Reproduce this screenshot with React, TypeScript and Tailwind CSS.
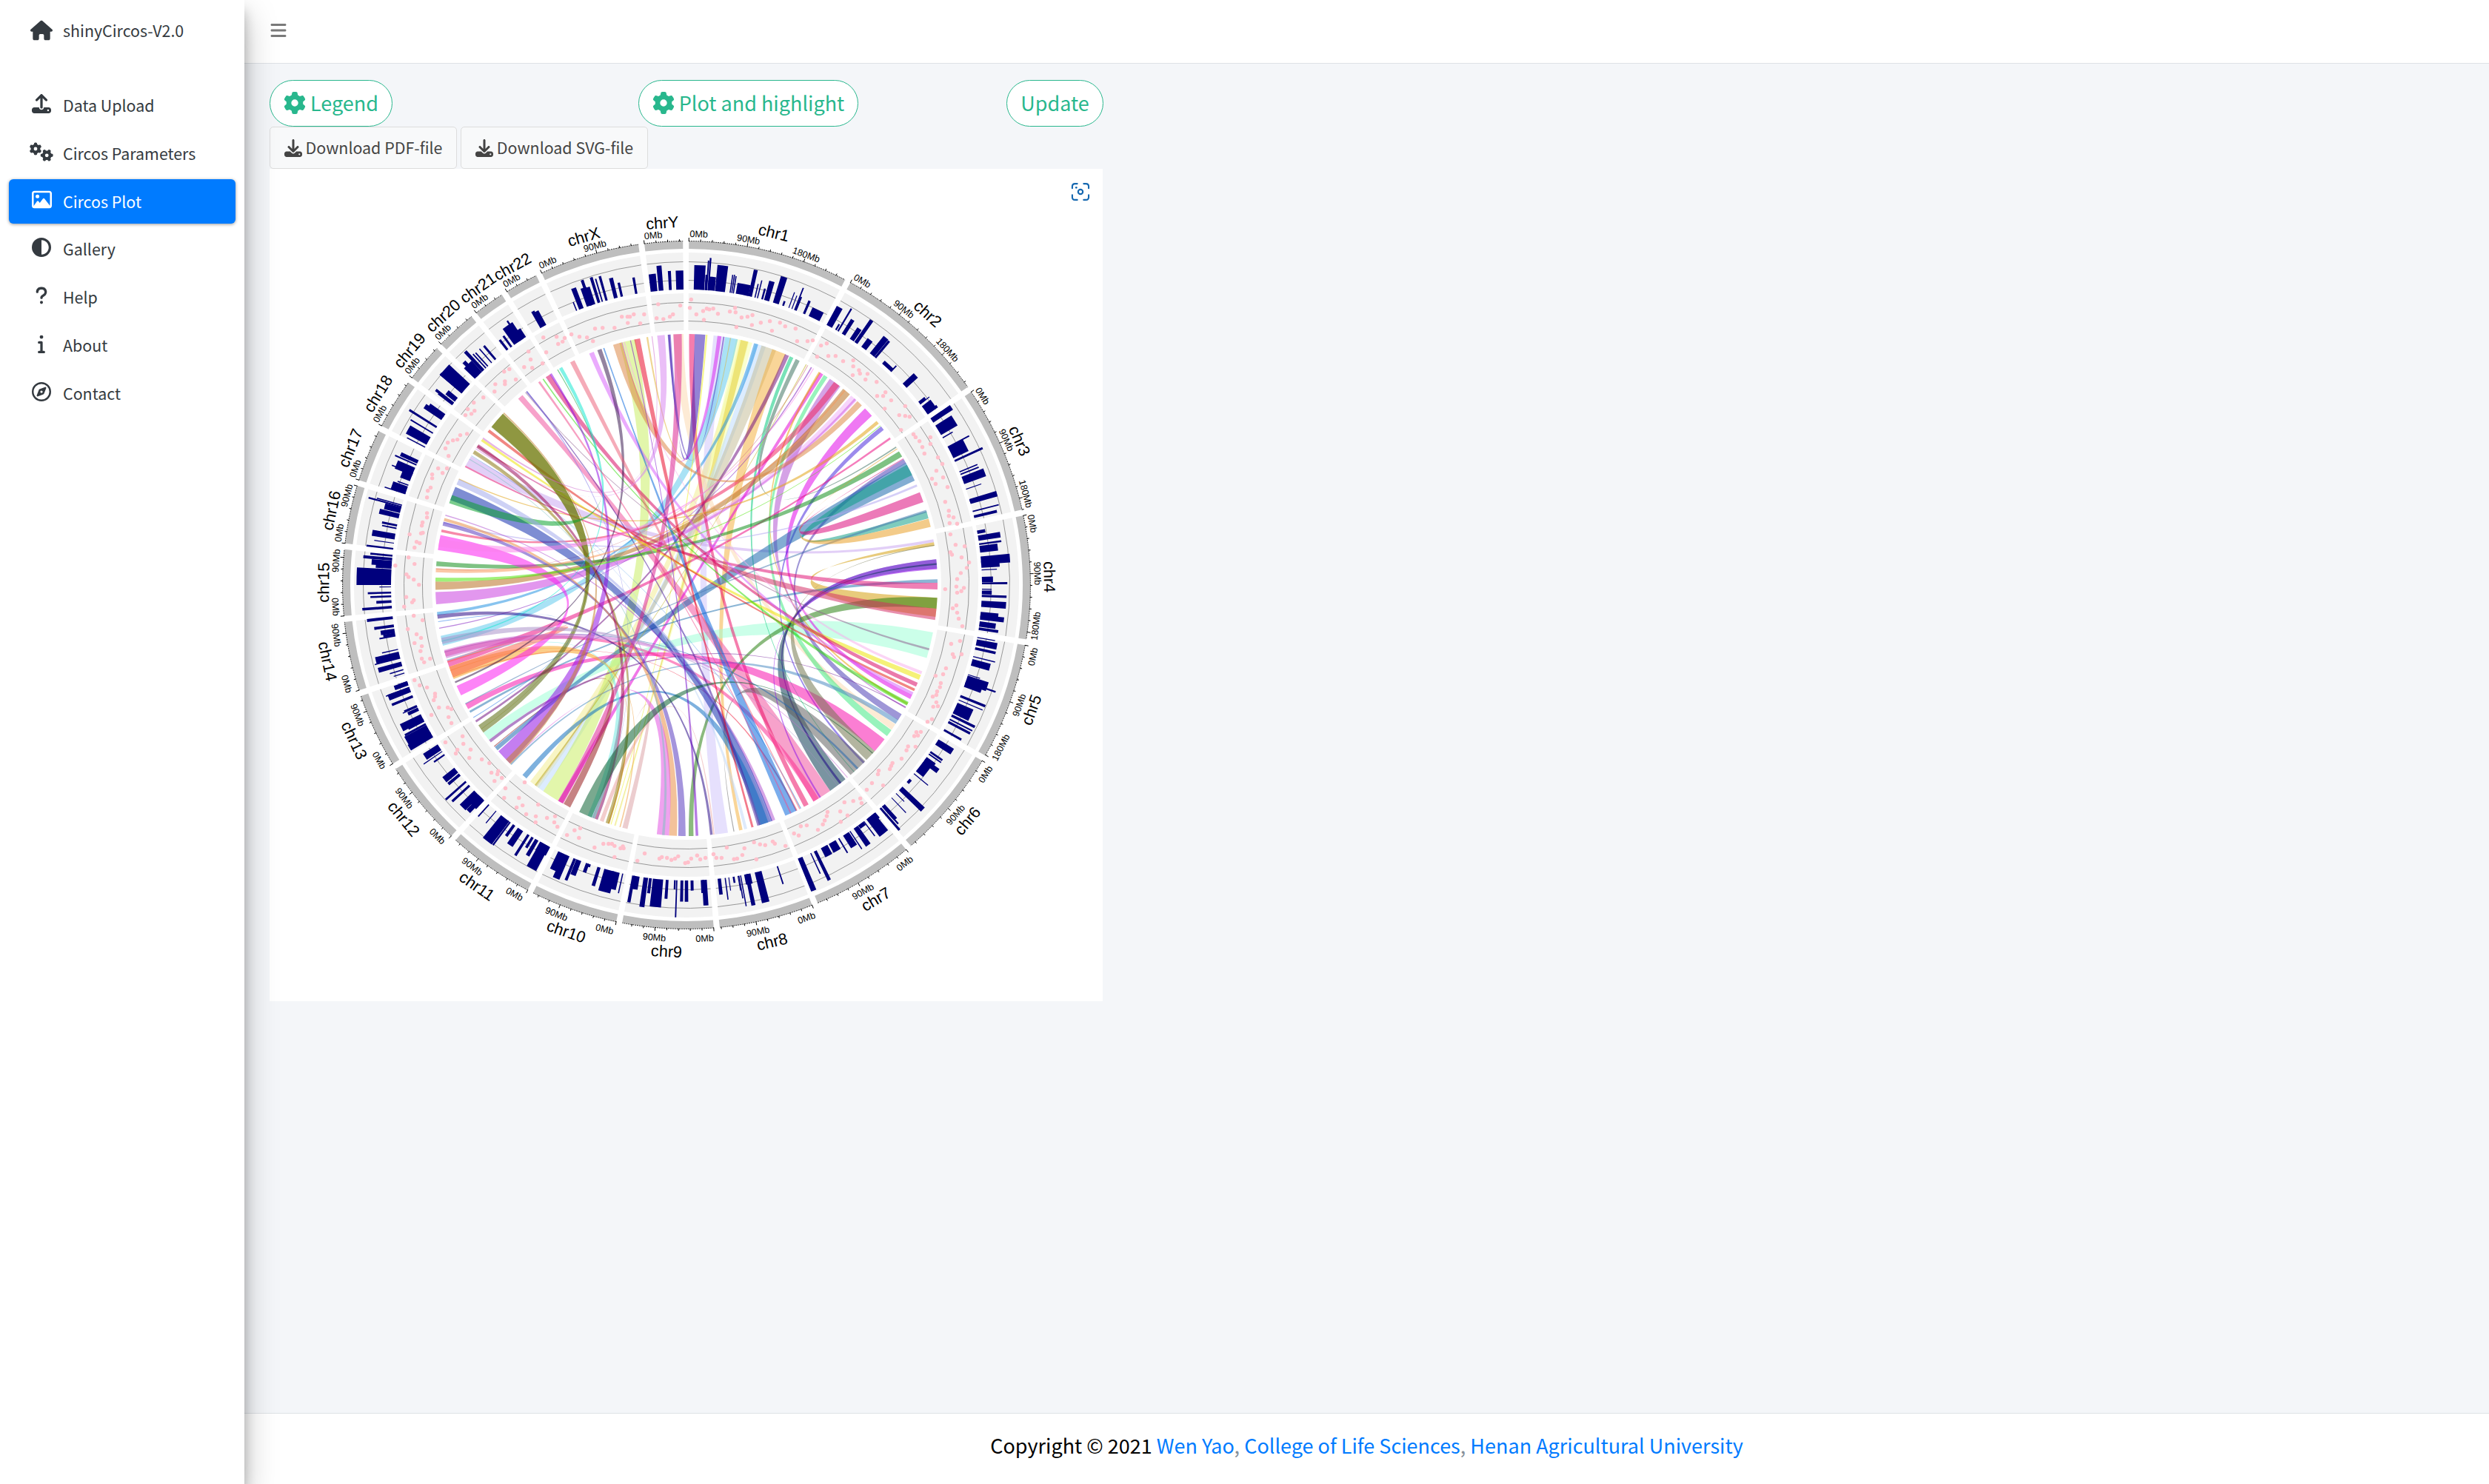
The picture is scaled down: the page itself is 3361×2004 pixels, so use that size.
import React from 'react';
import {
  FaHouse, FaUpload, FaDownload, FaGears, FaRegImage, FaCircleHalfStroke,
  FaQuestion, FaInfo, FaRegCompass, FaGear, FaBars,
} from 'react-icons/fa6';

/* ---------- circular genome plot ---------- */

const CX = 563;
const CY = 562;
const RAD = Math.PI / 180;
const DEG_PER_MB = 0.10854;

const CHROMS: [string, number][] = [
  ['chr1', 249.25], ['chr2', 243.2], ['chr3', 198.02], ['chr4', 191.15], ['chr5', 180.92],
  ['chr6', 171.12], ['chr7', 159.14], ['chr8', 146.36], ['chr9', 141.21], ['chr10', 135.53],
  ['chr11', 135.01], ['chr12', 133.85], ['chr13', 115.17], ['chr14', 107.35], ['chr15', 102.53],
  ['chr16', 90.35], ['chr17', 81.2], ['chr18', 78.08], ['chr19', 59.13], ['chr20', 63.03],
  ['chr21', 48.13], ['chr22', 51.3], ['chrX', 155.27], ['chrY', 59.37],
];

let cursor = 0.4;
const SECTORS = CHROMS.map(([name, mb]) => {
  const a0 = cursor;
  const a1 = a0 + mb * DEG_PER_MB;
  cursor = a1 + 1;
  return { name, mb, a0, a1 };
});

const pt = (a: number, r: number): [number, number] => [
  CX + r * Math.sin(a * RAD),
  CY - r * Math.cos(a * RAD),
];
const ps = (a: number, r: number) => pt(a, r).map((v) => v.toFixed(1)).join(' ');

const ring = (a0: number, a1: number, r0: number, r1: number) =>
  `M${ps(a0, r1)}A${r1} ${r1} 0 0 1 ${ps(a1, r1)}L${ps(a1, r0)}A${r0} ${r0} 0 0 0 ${ps(a0, r0)}Z`;
const arc = (a0: number, a1: number, r: number) => `M${ps(a0, r)}A${r} ${r} 0 0 1 ${ps(a1, r)}`;

/* Samples are stored per quadrant relative to the quadrant's own origin, in 1/2.851 px units. */
const K = 2.851;
const parse = (s: string) => s.trim().split(/\s+/).map((t) => t.split(',').map(Number));
const ORIGIN = { ne: [20, 1539], se: [20, 28.5], sw: [1502, 28.5], nw: [1502, 1539] } as const;

const BARS: Record<keyof typeof ORIGIN, string> = {
  ne: `72,308,42 97,345,6 105,290,4 113,280,5 120,353,26 160,309,40 198,345,3 205,345,3 211,350,3 242,380,50 287,326,14 296,380,3
  310,366,3 322,398,6 349,370,20 396,353,24 398,446,6 436,412,2 445,425,2 470,395,4 462,430,5 494,445,8 527,480,46
  610,470,24 608,535,5 655,475,5 660,518,14 686,552,18 733,520,14 727,595,22 788,587,22 800,600,8 800,690,44 828,695,4
  903,732,22 940,820,12 955,815,2 970,840,34 985,850,10 1040,855,20 1052,905,44 1045,950,3 1108,965,4 1095,1000,50
  1160,1012,7 1140,1075,4 1145,1085,4 1168,1105,30 1155,1150,2 1215,1187,20 1195,1192,12 1222,1230,4 1215,1255,10
  1170,1330,12 1228,1345,20 1232,1370,6 1218,1393,26 1265,1435,32 1225,1455,26 1215,1478,2 1200,1517,20 1255,1532,7`,
  se: `1195,45,2 1195,58,14 1252,74,8 1250,107,24 1220,150,22 1242,163,18 1210,187,20 1220,208,9
  1208,243,2 1215,265,24 1210,290,9 1208,325,3 1188,345,26 1150,388,2 1178,420,34 1210,440,5 1155,435,18 1170,495,9
  1160,510,2 1115,530,46 1130,575,9 1112,600,8 1120,590,4 1078,624,7 1043,670,24 1005,703,7 1000,712,4 988,745,18
  975,722,14 945,750,44 950,800,2 878,785,16 930,893,20 865,905,2 858,862,2 840,972,8 835,948,5 825,930,14
  780,985,40 745,995,3 750,935,34 720,1030,20 695,1045,3 665,1035,26 700,960,24 640,1060,4 600,1052,30 568,1070,28 570,1165,12
  535,1140,3 510,1205,20 392,1180,4 325,1250,28 278,1262,14 262,1180,24 250,1265,3 237,1235,3 228,1205,2 205,1175,6
  180,1240,3 190,1205,2 153,1220,12 95,1262,18 84,1214,12 42,1205,10`,
  sw: `1502,1248,12 1483,1247,10 1460,1308,4 1456,1200,5 1423,1236,10 1382,1268,42 1356,1215,10 1330,1268,18 1302,1200,22
  1280,1250,11 1240,1215,3 1215,1200,28 1185,1210,46 1143,1187,12 1109,1135,12 1126,1110,10 1065,1145,20 1038,1165,10
  1000,1158,26 988,1125,24 905,1120,40 940,1060,44 890,1070,14 885,1040,9 843,1070,9 822,1030,24 808,995,10
  757,1030,5 735,1015,42 770,1000,4 730,945,2 700,920,4 662,900,18 640,885,30 680,880,32 600,862,8 575,855,7
  585,795,10 570,778,24 490,718,2 530,710,5 495,690,26 435,655,24 425,630,38 418,607,7 405,578,28 430,580,12
  410,522,3 415,515,5 430,525,12 368,490,9 355,462,22 345,457,3 378,425,16 395,415,10 375,380,2 360,370,3 316,357,18
  302,335,3 306,320,26 330,290,3 320,235,4 325,213,16 300,196,10 335,225,10 272,165,10 254,122,9 308,95,9 285,75,6
  275,60,6 320,36,2`,
  nw: `232,1505,66 306,1465,14 290,1450,20 258,1430,10 285,1418,6 270,1387,6 300,1367,2 292,1338,22 330,1298,7 330,1310,4
  320,1255,18 340,1235,22 278,1203,5 310,1205,3 340,1162,3 368,1155,30 390,1140,3 405,1110,30 385,1075,32 368,1078,3
  380,1040,4 402,1035,14 426,972,3 430,940,34 440,903,4 435,865,7 495,850,18 512,847,14 537,788,9 548,800,10
  580,797,18 570,710,52 555,725,10 650,640,12 660,690,40 645,680,14 690,645,4 705,630,3 722,618,7 680,650,4
  783,595,8 797,580,7 813,540,44 812,522,5 855,555,16 910,485,12 925,485,14 1066,450,3 1067,396,18 1100,365,10
  1105,395,22 1120,393,18 1135,355,10 1152,360,4 1168,350,8 1211,357,14 1241,375,8 1298,355,8 1370,342,26
  1396,310,18 1436,330,10 1475,328,28`,
};

const DOTS: Record<keyof typeof ORIGIN, string> = {
  ne: `38,440 33,472 58,497 84,484 98,475 108,478 123,475 141,495 87,518 207,472 187,486 209,489 232,509 255,506 274,500 272,538
  212,546 306,529 341,523 349,560 380,529 400,543 440,552 446,600 486,600 506,597 538,617 560,609 523,660 566,657 594,657
  623,677 662,674 662,697 660,731 684,712 688,725 717,726 709,748 752,757 754,811 777,811 786,797 808,828 783,860 862,850
  839,885 862,888 879,891 846,942 894,959 902,970 917,985 928,1008 936,1033 959,970 959,996 988,1048 1005,1073 982,1099
  1008,1125 965,1130 979,1150 1025,1162 1016,1219 1030,1253 1030,1273 1048,1279 1033,1301 1062,1303 1036,1344 1056,1384
  1091,1390 1036,1413 1042,1422 1079,1433 1108,1452 1099,1473 1076,1493 1062,1516 1088,1550 1059,1545 1016,1555`,
  se: `1062,58 1078,52 1059,107 1045,118 1062,135 1068,158 1082,187 1073,244 1039,255 1079,295 1045,295 1050,306 1019,349
  1008,372 979,378 999,406 996,422 985,438 968,458 982,452 982,480 988,495 970,497 965,545 948,555 905,595 922,594 897,610
  911,608 902,651 873,650 867,665 848,697 813,714 808,725 803,737 760,743 757,757 734,791 777,800 714,817 689,850 694,868
  662,860 628,865 563,902 612,900 640,916 614,940 560,918 552,935 545,950 526,971 483,954 460,957 434,985 452,993 401,1033
  352,1016 360,1024 323,1030 303,1027 280,1019 243,1042 175,1039 235,1068 289,1085 203,1084 215,1082 155,1079 135,1079
  124,1065 93,1079 73,1085 61,1070 38,1082 26,1096 15,1099`,
  sw: `1470,1073 1458,1082 1444,1087 1427,1079 1407,1076 1398,1082 1341,1062 1313,1090 1260,1042 1248,1042 1257,1035 1225,1033
  1215,1025 1202,1025 1182,1025 1148,1039 1225,1076 1093,965 1071,973 1042,991 1088,1002 1005,959 993,942 996,919 965,925
  922,919 921,942 885,911 871,877 848,885 857,848 931,874 800,848 805,811 879,788 791,771 763,783 751,751 777,745 774,757
  743,714 714,700 666,694 671,662 643,640 640,611 614,677 620,663 574,634 597,560 586,537 520,529 549,500 583,500 597,506
  534,447 534,458 529,472 503,423 475,415 455,395 515,312 492,326 483,312 478,283 483,264 455,252 480,232 463,218 429,198
  486,164 452,147 415,112 446,95 452,87 423,75`,
  nw: `472,1538 452,1518 432,1508 424,1498 455,1458 432,1433 381,1464 455,1395 475,1378 463,1373 487,1338 480,1340 436,1344
  483,1310 486,1298 503,1279 503,1262 503,1202 506,1176 517,1164 523,1128 523,1113 563,1108 546,1090 580,1090 586,1042
  574,1013 583,991 603,982 620,979 631,962 657,957 651,885 674,880 686,868 660,862 683,837 720,817 763,794 766,766 803,766
  803,755 845,748 800,717 820,708 877,700 908,703 902,671 894,640 948,686 962,643 951,586 1002,583 1008,611 1025,602
  1033,588 1059,574 1090,583 1119,586 1142,600 1150,552 1179,549 1225,549 1253,506 1275,506 1284,506 1299,497 1276,530
  1324,532 1339,497 1387,512 1393,458 1413,515 1438,506 1450,497 1478,463`,
};

/* Each ribbon: two arcs in degrees and its base colour, drawn half transparent. */
const LINKS: [number, number, number, number, string][] = [
  [6.2, 8.9, 170.5, 173.5, '#cfc4fb'],
  [12.2, 14.4, 216, 218.5, '#f2ec90'],
  [11.4, 15.2, 196.3, 196.6, '#f6ffa8'],
  [12.5, 14.2, 196.5, 196.7, '#e4d040'],
  [15.9, 18.4, 214.8, 216.5, '#bcdcff'],
  [17.4, 20.9, 216.6, 217, '#c4bd98'],
  [20, 23.3, 167.1, 167.9, '#f4b03c'],
  [8.9, 11.8, 256, 258.3, '#5cc8ec'],
  [15.6, 16.6, 263.1, 263.8, '#1f8fe0'],
  [100.9, 106.9, 231.9, 234, '#9dffd6'],
  [357, 359.3, 123.7, 125.2, '#fbd9b0'],
  [344.5, 348.2, 210.8, 214.8, '#c8ee60'],
  [145.1, 149.6, 317.9, 319.2, '#f0509c'],
  [298.4, 300.9, 79.5, 80.2, '#c8a4f0'],
  [41, 42.7, 265.6, 268.4, '#f0b0fa'],
  [265.6, 268.4, 42, 42.5, '#d060e0'],
  [0.6, 1.9, 150.9, 152.1, '#ec0a64'],
  [1.9, 4.3, 355.8, 356.2, '#3414b0'],
  [4.4, 4.8, 197.4, 197.6, '#f0f020'],
  [7.1, 8, 345, 345.2, '#d820f0'],
  [23.1, 24.1, 236.8, 237.3, '#701080'],
  [24.3, 25.2, 138, 138.2, '#00c878'],
  [25.8, 26.8, 56.5, 56.8, '#3a705c'],
  [28.8, 29, 273.6, 273.8, '#d07080'],
  [29.7, 30, 260, 260.2, '#8020c0'],
  [32.1, 33, 209.6, 210.7, '#e400d4'],
  [31.8, 32.3, 118, 118.5, '#e8a000'],
  [33.2, 34.2, 125.3, 127, '#3ce880'],
  [34.8, 37.8, 119.1, 119.4, '#b050d0'],
  [36, 37.5, 282.2, 282.8, '#f0205c'],
  [38.6, 40.6, 268.9, 270.8, '#b86c1c'],
  [42.9, 44.3, 343, 345, '#dc8440'],
  [45.3, 47.6, 116, 117, '#e000e8'],
  [49.2, 50, 294.8, 295.1, '#e0a010'],
  [50.8, 51.8, 134.8, 135.3, '#4424dc'],
  [54, 54.5, 251, 252.6, '#ec0a80'],
  [57.8, 59.2, 274.3, 275.4, '#0c8c14'],
  [59.9, 61, 121, 122.6, '#4838b4'],
  [60.9, 65.4, 228.8, 229.8, '#1464ac'],
  [61.4, 64, 72.9, 74.6, '#0c9c84'],
  [68.3, 70.7, 59.7, 59.9, '#dc0478'],
  [66.4, 66.9, 284.2, 284.6, '#b0a4f0'],
  [72.6, 73.2, 241.6, 241.9, '#4878b0'],
  [74.7, 76.6, 57, 57.2, '#e89c20'],
  [80.2, 81, 92.9, 97.3, '#d49c08'],
  [84.1, 86.2, 141.9, 142.4, '#5a0cc0'],
  [84.1, 86, 141.9, 142.4, '#8040d8'],
  [85, 85.4, 140.7, 145.1, '#04344e'],
  [88.7, 89.5, 239.4, 239.9, '#2474b0'],
  [89.5, 91, 298, 298.4, '#e01074'],
  [92.9, 95.4, 178.4, 179.5, '#247c0c'],
  [95.4, 98, 303.5, 303.8, '#d42c64'],
  [104.6, 105.1, 320, 320.2, '#906090'],
  [110.1, 110.8, 345.5, 345.8, '#f8b0ec'],
  [111, 112.2, 305, 305.6, '#ece400'],
  [112.9, 113.9, 325.9, 327.1, '#d80460'],
  [114.4, 115, 307.6, 308.3, '#e41c14'],
  [115.3, 116.1, 337.2, 338.3, '#d860fc'],
  [117.8, 118.7, 325, 325.3, '#2cdc04'],
  [119, 119.2, 231.2, 231.9, '#701898'],
  [122.5, 123.6, 224.2, 224.6, '#4888c0'],
  [127.9, 131.4, 240.4, 241.7, '#f80cac'],
  [131.4, 134.2, 80.8, 81, '#70744c'],
  [134.6, 139.2, 169, 169.2, '#5c5c5c'],
  [136.8, 137.3, 254.4, 254.6, '#2468b0'],
  [147.6, 148, 86, 86.4, '#9010e8'],
  [148.2, 149.6, 253.4, 254.8, '#fc2c90'],
  [153.8, 154.2, 248.4, 248.6, '#f01c3c'],
  [152.8, 153, 301, 301.1, '#2080e0'],
  [154, 156.8, 340.6, 340.9, '#0464dc'],
  [159.3, 160.2, 286, 286.3, '#b054d0'],
  [160, 162.8, 289.8, 293, '#0c28ac'],
  [161, 163.2, 219.6, 220.8, '#0c6cc0'],
  [162.8, 163.6, 320.3, 320.6, '#4c1c9c'],
  [166, 166.7, 302, 302.2, '#c0d8f8'],
  [173.6, 173.9, 199.3, 200.2, '#e8a0a0'],
  [174, 174.6, 262.3, 263.2, '#240484'],
  [177.3, 177.9, 347, 347.2, '#7408cc'],
  [180.2, 181.9, 283.7, 284.6, '#5434bc'],
  [182.2, 184, 284.8, 285.5, '#e88c40'],
  [184, 186.8, 224.7, 224.9, '#e050e0'],
  [185, 185.6, 300, 300.2, '#80c0c0'],
  [193.6, 194.8, 201.8, 202, '#dca0a4'],
  [195.2, 195.5, 250, 250.2, '#f0a040'],
  [197.9, 198.3, 248, 251, '#f8a020'],
  [197.9, 198.8, 301.6, 302.5, '#90780c'],
  [200.7, 202.1, 303.2, 304.1, '#980450'],
  [201.4, 203.2, 252.4, 252.7, '#70e8e0'],
  [202.2, 205.3, 132, 132.2, '#045c2c'],
  [207.6, 209.3, 229.9, 230.1, '#941414'],
  [209.4, 210.8, 357, 358.9, '#dc2090'],
  [216.9, 217.2, 28.4, 28.6, '#c0b020'],
  [224.8, 228.5, 327, 327.5, '#900ce4'],
  [224.5, 226, 313.1, 313.4, '#c4802c'],
  [234, 236, 309, 313, '#546404'],
  [234.9, 235, 309.1, 313, '#7c8410'],
  [243.9, 246.3, 278, 281.5, '#fc14f0'],
  [248.6, 251, 252, 252.3, '#fc6450'],
  [247, 247.4, 339.2, 340.2, '#34144c'],
  [256.9, 257.2, 329.5, 330.3, '#10e8d0'],
  [256.4, 257.8, 143, 143.1, '#a890c8'],
  [261.5, 261.7, 238, 238.2, '#2878e8'],
  [253, 255, 140, 140.2, '#c870d4'],
  [270.8, 271.7, 50.5, 50.7, '#4ce404'],
  [272.9, 273.8, 39, 39.3, '#f89858'],
  [278.8, 280.6, 30.3, 30.5, '#fc80ec'],
  [289, 291, 329, 329.2, '#04a028'],
  [293.6, 295, 160.2, 160.4, '#a0a8ec'],
  [305.6, 306, 352, 352.2, '#d070d0'],
  [320.3, 320.6, 200.9, 201, '#8078e8'],
  [323.8, 324.3, 155.3, 155.6, '#f04c8c'],
  [332.4, 333.5, 153, 153.3, '#ec6078'],
  [348, 349.3, 164.5, 165, '#e80424'],
  [350.8, 351.2, 10, 10.2, '#e0b030'],
  [353.3, 355, 302.8, 303, '#d884f0'],
  [355.7, 356.4, 8.4, 8.7, '#4c28b8'],
];

const RL = 339;
const ribbon = (a0: number, a1: number, b0: number, b1: number) =>
  `M${ps(a0, RL)}A${RL} ${RL} 0 0 1 ${ps(a1, RL)}Q${CX} ${CY} ${ps(b0, RL)}` +
  `A${RL} ${RL} 0 0 1 ${ps(b1, RL)}Q${CX} ${CY} ${ps(a0, RL)}Z`;

const quadrants = ['ne', 'se', 'sw', 'nw'] as const;

function ArcText({ a, r, size, children }: { a: number; r: number; size: number; children: string }) {
  const norm = ((a % 360) + 360) % 360;
  const flipped = norm > 90.8 && norm < 269.5;
  const [x, y] = pt(norm, r);
  return (
    <text
      transform={`translate(${x.toFixed(1)} ${y.toFixed(1)}) rotate(${(flipped ? norm + 180 : norm).toFixed(2)})`}
      y={size * 0.36}
      fontSize={size}
      textAnchor="middle"
    >
      {children}
    </text>
  );
}

function CircosPlot() {
  return (
    <svg
      className="block h-[1124px] w-[1124px] font-normal"
      viewBox="0 0 1124 1124"
      fontFamily="'Liberation Sans', Arial, sans-serif"
    >
      {SECTORS.map((s) => {
        const ticks = [];
        for (let mb = 0; mb <= s.mb; mb += 18) {
          const a = s.a0 + mb * DEG_PER_MB;
          ticks.push(`M${ps(a, 464)}L${ps(a, mb % 90 === 0 ? 469 : 467)}`);
        }
        const labels = [];
        for (let mb = 0; mb <= s.mb; mb += 90) {
          const half = mb === 0 ? 1.6 : mb === 90 ? 2 : 2.4;
          const raw = s.a0 + mb * DEG_PER_MB;
          labels.push({ mb, a: Math.min(Math.max(raw, s.a0 + half), s.a1 - half) });
        }
        const mid = (s.a0 + s.a1) / 2;
        const low = mid > 91 && mid < 269;
        return (
          <g key={s.name}>
            <path d={ring(s.a0, s.a1, 454, 464)} fill="#bebebe" />
            <path d={ring(s.a0, s.a1, 399, 449)} fill="#f2f2f2" />
            <path d={ring(s.a0, s.a1, 344, 394)} fill="#f2f2f2" />
            {[436.5, 411.5, 381.5, 356.5].map((r) => (
              <path key={r} d={arc(s.a0, s.a1, r)} fill="none" stroke="#808080" strokeWidth="0.8" />
            ))}
            <path d={arc(s.a0, s.a1, 464.4)} fill="none" stroke="#000" strokeWidth="0.9" strokeDasharray="2 1" />
            <path d={ticks.join('')} stroke="#000" strokeWidth="1" />
            {labels.map((l) => (
              <ArcText key={l.mb} a={l.a} r={low ? 477.5 : 474.5} size={12.6}>{`${l.mb}Mb`}</ArcText>
            ))}
            <ArcText a={mid} r={low ? 495 : 490.5} size={21.6}>{s.name}</ArcText>
          </g>
        );
      })}
      {quadrants.map((q) => (
        <g key={q}>
          {parse(BARS[q]).map(([x, y, w], i) => {
            const dx = (x - ORIGIN[q][0]) / K;
            const dy = (y - ORIGIN[q][1]) / K;
            const a = Math.atan2(dx, -dy) / RAD;
            const r = Math.max(Math.hypot(dx, dy), 403);
            const h = (w + 1.5) / K / r / RAD / 2;
            return <path key={i} d={ring(a - h, a + h, 399, r)} fill="#00007d" />;
          })}
          {parse(DOTS[q]).map(([x, y], i) => (
            <circle
              key={i}
              cx={CX + (x - ORIGIN[q][0]) / K}
              cy={CY + (y - ORIGIN[q][1]) / K}
              r="2.7"
              fill="#ffc0cb"
            />
          ))}
        </g>
      ))}
      {LINKS.map(([a0, a1, b0, b1, c], i) => (
        <path key={i} d={ribbon(a0, a1, b0, b1)} fill={c} fillOpacity="0.53" />
      ))}
    </svg>
  );
}

/* ---------- page ---------- */

const NAV = [
  { label: 'Data Upload', Icon: FaUpload, size: 26 },
  { label: 'Circos Parameters', Icon: FaGears, size: 32 },
  { label: 'Circos Plot', Icon: FaRegImage, size: 27, active: true },
  { label: 'Gallery', Icon: FaCircleHalfStroke, size: 26 },
  { label: 'Help', Icon: FaQuestion, size: 26 },
  { label: 'About', Icon: FaInfo, size: 26 },
  { label: 'Contact', Icon: FaRegCompass, size: 26 },
];

function PillButton({ label, gear, className }: { label: string; gear?: boolean; className: string }) {
  return (
    <button
      className={`flex h-[63px] shrink-0 items-center justify-center gap-[6px] rounded-full border border-[#28b78d] bg-white text-[27px] text-[#28b78d] ${className}`}
    >
      {gear && <FaGear size={30} className="-mt-[2px]" />}
      <span>{label}</span>
    </button>
  );
}

function DownloadButton({ label }: { label: string }) {
  return (
    <button className="flex h-[57px] w-[253px] items-center justify-center gap-[5px] rounded-[5px] border border-[#ddd] bg-[#f8f9fa] text-[21.4px] text-[#444]">
      <FaDownload size={24} />
      <span>{label}</span>
    </button>
  );
}

export default function App() {
  return (
    <div className="flex h-[2004px] w-[3361px] overflow-hidden bg-[#f4f6f9] font-['Noto_Sans_CJK_SC','Open_Sans',sans-serif] font-normal whitespace-nowrap">
      <aside className="relative z-10 flex w-[330px] shrink-0 flex-col bg-white text-[21.4px] text-[#343a40] shadow-[0_21px_42px_rgba(0,0,0,0.25),0_15px_15px_rgba(0,0,0,0.22)]">
        <div className="flex h-[85px] items-center gap-[14px] pl-[41px]">
          <FaHouse size={30} className="-mt-[4px]" />
          <span className="-mt-[3px]">shinyCircos-V2.0</span>
        </div>
        <nav className="mt-[27px] flex flex-col gap-[4.8px] px-[12px]">
          {NAV.map(({ label, Icon, size, active }) => (
            <a
              key={label}
              className={
                active
                  ? 'flex h-[60px] items-center rounded-[6px] bg-[#007bff] pl-[28px] text-white shadow-[0_1px_4px_rgba(0,0,0,0.4)]'
                  : 'flex h-[60px] items-center pl-[28px]'
              }
            >
              <span className="flex w-[32px] justify-center">
                <Icon size={size} className="-mt-[4px] shrink-0" />
              </span>
              <span className="ml-[13px]">{label}</span>
            </a>
          ))}
        </nav>
      </aside>

      <div className="flex min-w-0 flex-1 flex-col">
        <header className="flex h-[86px] shrink-0 items-center border-b border-[#dee2e6] bg-white pl-[34px]">
          <FaBars size={24} className="-mt-[3px] text-[#7a7a7a]" />
        </header>

        <main className="flex-1 pt-[22px] pl-[34px]">
          <div className="flex w-[1126px]">
            <PillButton label="Legend" gear className="w-[166px]" />
            <PillButton label="Plot and highlight" gear className="ml-[332px] w-[297px]" />
            <PillButton label="Update" className="ml-auto w-[131px]" />
          </div>
          <div className="flex gap-[5px]">
            <DownloadButton label="Download PDF-file" />
            <DownloadButton label="Download SVG-file" />
          </div>
          <div className="relative h-[1124px] w-[1125px] bg-white">
            <CircosPlot />
            <svg
              className="absolute top-[18px] right-[17px] h-[26px] w-[26px]"
              viewBox="0 0 27 27"
              fill="none"
              stroke="#1668b0"
              strokeWidth="2.2"
              strokeLinecap="round"
            >
              <path d="M2 8.500V6Q2 2.200 5.800 2.200H9M18 2.200H21.200Q25 2.200 25 6V8.500M25 18V21Q25 24.800 21.200 24.800H18M9 24.800H5.800Q2 24.800 2 21V18" />
              <circle cx="13.500" cy="13.500" r="3.300" />
              <circle cx="7.600" cy="7.600" r="1.400" fill="#1668b0" stroke="none" />
            </svg>
          </div>
        </main>

        <footer className="flex h-[96px] shrink-0 items-center justify-center border-t border-[#dee2e6] bg-white text-[27px] text-[#869099]">
          <p className="-mt-[8px]">
            <span className="text-black">Copyright © 2021 </span>
            <a className="text-[#007bff]">Wen Yao</a>, <a className="text-[#007bff]">College of Life Sciences</a>,{' '}
            <a className="text-[#007bff]">Henan Agricultural University</a>
          </p>
        </footer>
      </div>
    </div>
  );
}
